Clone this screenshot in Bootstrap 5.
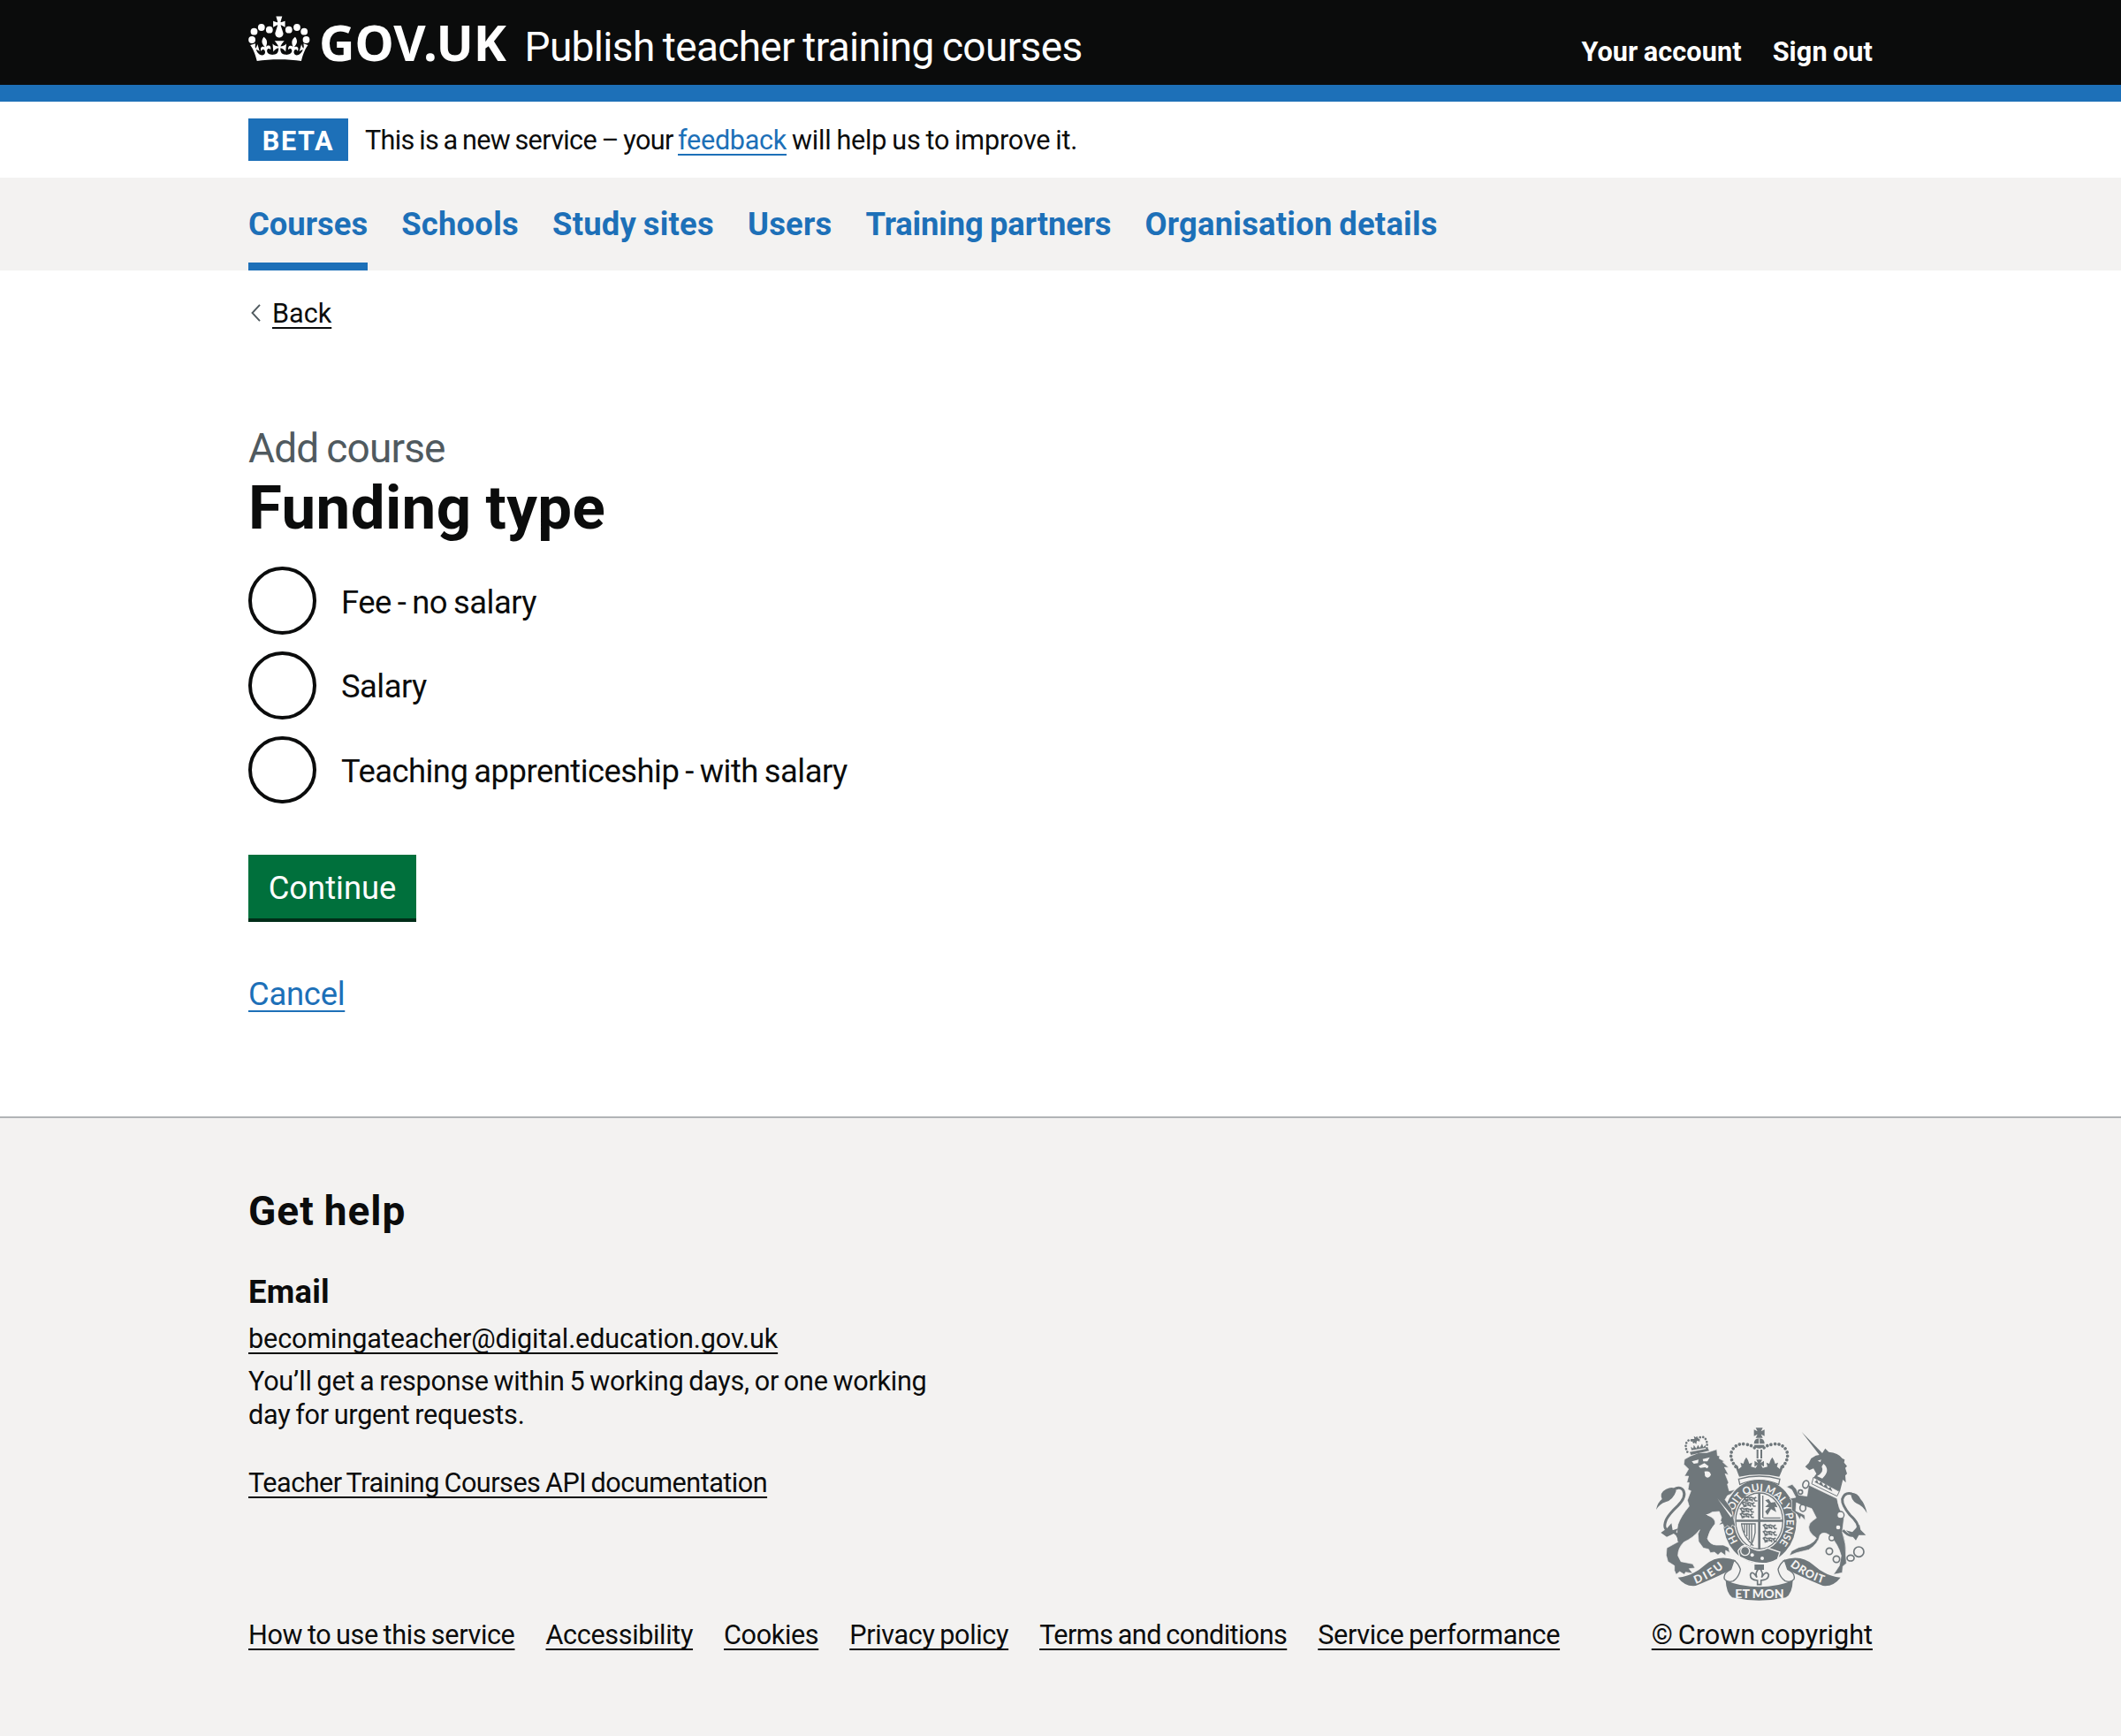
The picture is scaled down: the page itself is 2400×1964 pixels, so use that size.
<!DOCTYPE html>
<html lang="en">
<head>
<meta charset="utf-8">
<meta name="viewport" content="width=device-width, initial-scale=1">
<title>Funding type – Publish teacher training courses</title>
<link href="https://cdn.jsdelivr.net/npm/bootstrap@5.3.0/dist/css/bootstrap.min.css" rel="stylesheet">
<style>
  :root { --ink: #0b0c0c; --brand: #1d70b8; --grey: #f3f2f1; --crest: #6f777b; }
  body { font-family: Roboto, "Liberation Sans", sans-serif; color: var(--ink); font-size: 30.6px; line-height: 38.3px; word-spacing: -.05em; }
  .wrap { width: 1838px; margin-left: 281px; }
  a { color: var(--brand); text-decoration: underline; text-decoration-thickness: 2px; text-underline-offset: 5px; text-decoration-skip-ink: none; }
  a.ink { color: var(--ink); }

  .site-header { background: var(--ink); height: 115px; border-bottom: 19px solid var(--brand); padding-top: 17.6px; line-height: 1; }
  .site-header a { color: #fff; text-decoration: none; }
  .crown { width: 70px; height: 51px; margin-bottom: -5.2px; margin-left: -.5px; fill: #fff; }
  .wordmark { font: 700 56px/1 "Noto Sans", sans-serif; margin-left: 10.5px; }
  .service { font-size: 46px; letter-spacing: -.66px; margin-left: 20.5px; }
  .account { gap: 35px; letter-spacing: .12px; }

  .phase { height: 86px; }
  .phase-tag { background: var(--brand); color: #fff; width: 113px; height: 48px; line-height: 51px; letter-spacing: 1.6px; }
  .phase-text { margin-left: 19px; letter-spacing: -.65px; padding-top: 2px; }
  .phase-text a { letter-spacing: -.29px; }
  .phase-end { letter-spacing: -.18px; }

  .service-nav { background: var(--grey); gap: 38.1px; height: 105px; padding-left: 281px; font-size: 36.4px; letter-spacing: .22px; }
  .service-nav a { line-height: 106px; height: 105px; text-decoration: none; }
  .service-nav a.current { box-shadow: inset 0 -9px var(--brand); letter-spacing: 0; }
  .service-nav .n-partners { letter-spacing: -.15px; }

  .back { margin-top: 29.5px; padding-left: 3px; gap: 13px; }
  .back svg { width: 11px; height: 20px; stroke: #505a5f; fill: none; margin-top: -1px; }
  .caption-l { color: #505a5f; font-size: 46px; line-height: 57px; letter-spacing: -.86px; margin-top: 105.5px; }
  .title-xl { font-size: 69px; line-height: 76.6px; letter-spacing: .4px; margin: .8px 0 27.6px; }
  .choices { gap: 19.1px; font-size: 36.4px; letter-spacing: -.52px; }
  .choice { padding: 0; margin: 0; min-height: 76.6px; }
  .choice .form-check-input { width: 76.6px; height: 76.6px; margin: 0; border: 4px solid var(--ink); float: none; }
  .choice label { margin-left: 28.4px; padding-top: 4.5px; }
  .go { background: #00703c; color: #fff; border: 0; border-radius: 0; font-size: 36.4px; line-height: 75px; width: 190px; height: 72px; padding: 0; margin-top: 58px; box-shadow: 0 4px #002d18; word-spacing: 0; }
  .cancel { font-size: 36.4px; line-height: 48px; letter-spacing: -.25px; margin-top: 62px; text-underline-offset: 6px; }

  .site-footer { margin-top: 113.5px; background: var(--grey); border-top: 2px solid #b1b4b6; padding-top: 77px; padding-bottom: 94px; }
  .h-get { font-size: 46px; line-height: 57px; letter-spacing: 1px; margin: 0; }
  .h-email { font-size: 36.4px; line-height: 46px; letter-spacing: .25px; margin: 40px 0 11px; }
  .mail { letter-spacing: -.12px; }
  .reply { margin: 10px 0 38.4px; letter-spacing: -.25px; }
  .api { letter-spacing: -.5px; }
  .links { gap: 35px; margin-top: 133.2px; letter-spacing: -.36px; }
  .l-terms { letter-spacing: -.57px; }
  .crest { width: 240px; height: 196px; margin-bottom: 19.5px; }
</style>
<script src="https://cdn.jsdelivr.net/npm/bootstrap@5.3.0/dist/js/bootstrap.bundle.min.js"></script>
</head>
<body class="d-flex flex-column min-vh-100">

<header class="site-header">
  <div class="wrap d-flex align-items-baseline">
    <svg class="crown" viewBox="280.5 20 70 51" aria-hidden="true">
      <g transform="translate(282.7 9.8) scale(2.04)">
        <path transform="translate(0 5.3)" d="M17 4.7l2.3 1.2V2.5l-2.3.7-.2-.2.9-3h-3.4l.9 3-.2.2c-.1.1-2.3-.7-2.3-.7v3.4L15 4.7c.1.1.1.2.2.2l-1.3 4c-.1.2-.1.4-.1.6 0 1.1.8 2 1.9 2.2h.7c1-.2 1.9-1.1 1.9-2.1 0-.2 0-.4-.1-.6l-1.3-4c-.1-.2 0-.2.1-.3"/>
        <path d="M16 29.2c4.4 0 8.6.3 12.3.8 1.1-4.5 2.4-7 3.7-8.8l-2.5-.9c.2 1.3.3 1.9 0 2.7-.4-.4-.8-1.1-1.1-2.3l-1.2 4c.7-.5 1.3-.8 2-.9-1.1 2.5-2.6 3.1-3.5 3-1.1-.2-1.7-1.2-1.5-2.1.3-1.2 1.5-1.5 2.1-.1 1.1-2.3-.8-3-2-2.3 1.9-1.9 2.1-3.5.6-5.6-2.1 1.6-2.1 3.2-1.2 5.5-1.2-1.4-3.2-.6-2.5 1.6.9-1.4 2.1-.5 1.9.8-.2 1.1-1.7 2.1-3.5 1.9-2.7-.2-2.9-2.1-2.9-3.6.7-.1 1.9.5 2.9 1.9l.4-4.3c-1.1 1.1-2.1 1.4-3.2 1.4.4-1.2 2.1-3 2.1-3h-5.4s1.7 1.9 2.1 3c-1.1 0-2.1-.2-3.2-1.4l.4 4.3c1-1.4 2.2-2 2.9-1.9-.1 1.5-.2 3.4-2.9 3.6-1.9.2-3.4-.8-3.5-1.9-.2-1.3 1-2.2 1.9-.8.7-2.3-1.2-3-2.5-1.6.9-2.2.9-3.9-1.2-5.5-1.5 2-1.3 3.7.6 5.6-1.2-.7-3.1 0-2 2.3.6-1.4 1.8-1.1 2.1.1.2.9-.3 1.9-1.5 2.1-.9.2-2.4-.5-3.5-3 .6 0 1.2.3 2 .9l-1.2-4c-.3 1.1-.7 1.9-1.1 2.3-.3-.8-.2-1.4 0-2.7L0 21.200c1.3 1.800 2.600 4.300 3.700 8.800 3.700-.5 7.900-.8 12.300-.8z"/>
      </g>
      <circle cx="304.300" cy="35.700" r="3.900"/><circle cx="295.300" cy="33" r="3.900"/><circle cx="287" cy="37.700" r="3.900"/><circle cx="284.600" cy="47" r="3.900"/>
      <circle cx="326.300" cy="35.700" r="3.900"/><circle cx="335.500" cy="33" r="3.900"/><circle cx="343.700" cy="37.700" r="3.900"/><circle cx="346" cy="47" r="3.900"/>
    </svg>
    <a class="wordmark" href="#">GOV.UK</a>
    <a class="service" href="#">Publish teacher training courses</a>
    <nav class="account d-flex ms-auto fw-bold">
      <a href="#">Your account</a>
      <a href="#">Sign out</a>
    </nav>
  </div>
</header>

<div class="phase wrap d-flex align-items-center">
  <strong class="phase-tag text-center">BETA</strong>
  <span class="phase-text">This is a new service – your <a href="#">feedback</a><span class="phase-end"> will help us to improve it.</span></span>
</div>

<nav class="service-nav d-flex fw-bold">
  <a class="current" href="#">Courses</a>
  <a href="#">Schools</a>
  <a href="#">Study sites</a>
  <a href="#">Users</a>
  <a class="n-partners" href="#">Training partners</a>
  <a href="#">Organisation details</a>
</nav>

<main class="wrap d-flex flex-column align-items-start">
  <div class="back d-flex align-items-center">
    <svg viewBox="0 0 11 20" aria-hidden="true"><path d="M10 .8 1.500 10 10 19.200" stroke-width="1.900"/></svg>
    <a class="ink" href="#">Back</a>
  </div>
  <div class="caption-l">Add course</div>
  <h1 class="title-xl fw-bold">Funding type</h1>
  <div class="choices d-flex flex-column">
    <div class="choice form-check d-flex align-items-center"><input class="form-check-input" type="radio" name="funding" id="f1"><label for="f1">Fee - no salary</label></div>
    <div class="choice form-check d-flex align-items-center"><input class="form-check-input" type="radio" name="funding" id="f2"><label for="f2">Salary</label></div>
    <div class="choice form-check d-flex align-items-center"><input class="form-check-input" type="radio" name="funding" id="f3"><label for="f3">Teaching apprenticeship - with salary</label></div>
  </div>
  <button class="go btn" type="button">Continue</button>
  <a class="cancel" href="#">Cancel</a>
</main>

<footer class="site-footer flex-grow-1">
  <div class="wrap d-flex justify-content-between align-items-end">
    <div class="d-flex flex-column align-items-start">
      <h2 class="h-get fw-bold">Get help</h2>
      <h3 class="h-email fw-bold">Email</h3>
      <a class="ink mail" href="#">becomingateacher@digital.education.gov.uk</a>
      <p class="reply">You’ll get a response within 5 working days, or one working<br>day for urgent requests.</p>
      <a class="ink api" href="#">Teacher Training Courses API documentation</a>
      <div class="links d-flex">
        <a class="ink" href="#">How to use this service</a>
        <a class="ink" href="#">Accessibility</a>
        <a class="ink" href="#">Cookies</a>
        <a class="ink" href="#">Privacy policy</a>
        <a class="ink l-terms" href="#">Terms and conditions</a>
        <a class="ink" href="#">Service performance</a>
      </div>
    </div>
    <div class="d-flex flex-column align-items-center">
      <svg class="crest" viewBox="72 75 720 588" role="img" aria-label="Royal coat of arms" fill="#6f777b">
        <defs>
          <path id="arc" d="M352 464 A92 105 0 1 1 492 464"/>
          <path id="arcL" d="M206 606 Q262 586 306 546"/>
          <path id="arcR" d="M526 544 Q586 592 650 607"/>
          <g id="cat" fill="none" stroke="#6f777b" stroke-width="5" stroke-linejoin="round"><path d="M0 6 L8 2 14 6 26 4 36 8 44 4M4 6 L8 14 16 12 14 18M22 7 L22 13 30 12 30 18M36 8 L40 16 48 16M6 18 L12 16"/></g>
        </defs>
        <!-- centre crown -->
        <path d="M410 76 L434 76 428 88 440 82 440 104 428 98 434 110 410 110 416 98 404 104 404 82 416 88ZM404 130 Q404 112 422 112 Q440 112 440 130ZM404 134 L440 134 Q436 146 422 146 Q408 146 404 134ZM413 150 h6 v30 h-6zM426 150 h6 v30 h-6z"/>
        <path d="M422 112v20" stroke="#f3f2f1" stroke-width="3"/>
        <g fill="none" stroke="#6f777b" stroke-width="11" stroke-linecap="round" stroke-dasharray=".1 13.200"><path d="M342 208 Q318 178 330 152 Q346 126 376 132 Q400 136 406 144"/><path d="M502 208 Q526 178 514 152 Q498 126 468 132 Q444 136 438 144"/></g>
        <path d="M338 198 L350 206 352 216 362 208 358 194 368 198 372 186 378 176 384 186 388 198 398 194 394 208 410 212 416 202 406 208 406 188 418 196 412 184 432 184 426 196 438 188 438 208 428 202 434 212 450 208 446 194 456 198 460 186 466 176 472 186 476 198 486 194 482 208 492 216 494 206 506 198 Q500 222 490 242 Q422 228 354 242 Q346 222 338 198Z"/>
        <!-- garter -->
        <ellipse cx="424" cy="394" rx="124" ry="142"/>
        <path d="M352 250 Q422 230 492 250 L488 268 Q422 240 356 268Z" fill="#f3f2f1" stroke="#6f777b" stroke-width="4"/>
        <ellipse cx="422" cy="392" rx="86" ry="101" fill="#f3f2f1"/>
        <ellipse cx="422" cy="392" rx="80" ry="95" fill="none" stroke="#6f777b" stroke-width="4"/>
        <path d="M418 298h8v188h-8zM343 388h158v7h-158z"/>
        <path d="M434 306v76M436 382h58M360 402h48v30q-6 32-16 44M362 404q4 40 40 72M372 404v28M380 404v40M388 404v52M396 404v60" fill="none" stroke="#6f777b" stroke-width="4"/>
        <use href="#cat" x="362" y="326"/><use href="#cat" x="356" y="346"/><use href="#cat" x="356" y="364"/><use href="#cat" x="368" y="308"/>
        <use href="#cat" x="434" y="402"/><use href="#cat" x="434" y="424"/><use href="#cat" x="434" y="446"/>
        <path d="M442 322 L454 318 462 330 476 328 484 346 474 344 480 362 462 352 450 372 442 360 456 346 442 344 454 334Z"/>
        <text fill="#f3f2f1" font-family="Lato, sans-serif" font-weight="700" font-size="35"><textPath href="#arc" textLength="456" startOffset="3">HON SOIT QUI MAL Y PENSE</textPath></text>
        <path d="M350 494 Q366 466 388 480 Q420 502 450 484 L492 498 484 522 Q450 542 410 534 Q380 528 356 514Z" stroke="#f3f2f1" stroke-width="4"/>
        <circle cx="374" cy="494" r="15" fill="none" stroke="#f3f2f1" stroke-width="4"/><circle cx="398" cy="508" r="6" fill="#f3f2f1"/><circle cx="432" cy="519" r="6" fill="#f3f2f1"/>
        <!-- lion -->
        <path d="M168 183 L188 172 215 161 245 160 278 149 280 170 288 172 286 180 304 190 298 192 318 211 304 210 318 236 306 232 318 262 314 268 320 290 340 286 324 302 314 306 306 320 328 350 334 380 342 412 330 406 326 416 314 408 304 416 298 402 286 406 294 380 286 360 262 362 246 372 Q276 384 272 402 Q252 424 246 452 Q254 472 276 474 L300 474 318 482 322 500 308 492 308 510 292 498 282 508 270 498 256 500 250 488 232 484 216 462 214 436 220 422 Q200 448 166 464 Q146 484 146 510 L156 530 196 538 204 552 184 554 196 570 172 566 168 574 152 564 140 574 134 560 134 544 112 530 106 508 108 484 148 462 Q138 440 146 404 Q156 376 184 342 L178 322 190 290 180 286 184 262 176 262 182 240 168 240 182 216 166 200Z" stroke="#f3f2f1" stroke-width="2"/>
        <path d="M193 190 L216 184 214 196 200 198ZM230 182 L254 176 246 190 232 190ZM216 206 L236 196 250 206 246 214 238 210 222 212ZM236 224 Q256 220 258 236 Q248 252 238 240ZM280 316 L330 374 326 380ZM240 370 L276 364 290 374 282 382 296 396 284 404 274 384Z" fill="#f3f2f1"/>
        <path d="M150 462 Q150 432 120 426 Q92 424 106 388 Q116 368 146 340 Q176 310 164 288 Q152 270 124 290" fill="none" stroke="#6f777b" stroke-width="9"/>
        <path d="M72 354 Q76 330 92 318 Q82 296 106 284 Q132 272 140 290 Q130 320 104 328 Q84 334 72 354ZM88 432 L108 418 124 400 128 424 146 418 138 432 108 446Z"/>
        <path d="M186 158 L248 146 252 154 190 168ZM192 152 L190 140 198 146 200 134 208 146 214 134 220 144 228 130 232 142 240 134 240 144ZM200 104 L206 108 212 104 212 114 220 114 220 122 210 120 208 132 200 122 190 122 192 114 202 114Z"/>
        <g fill="none" stroke="#6f777b" stroke-width="8" stroke-linecap="round" stroke-dasharray=".1 10.500"><path d="M178 158 Q166 134 180 120 Q192 112 202 128 Q212 104 234 108 Q248 118 244 146"/></g>
        <!-- unicorn -->
        <path d="M566 90 L636 162 646 146 658 158 Q690 160 704 180 L712 184 710 194 720 206 714 212 720 232 714 238 716 262 706 252 696 292 604 248 616 232 606 214 592 220 578 208 590 196 598 180 614 170 626 168Z"/>
        <path d="M640 198 Q666 220 636 248 L618 240 Q644 226 634 208ZM620 188 l12 -4 -2 8z" fill="#f3f2f1"/>
        <path d="M606 244 L694 292 686 308 600 266Z" fill="#f3f2f1" stroke="#6f777b" stroke-width="3"/>
        <path d="M610 260 l8 -8 6 14 8 -8 8 16 8 -8 8 16 8 -6 6 16z"/>
        <path d="M590 270 L686 316 Q690 350 710 380 L704 430 Q718 470 716 510 L718 536 706 546 704 568 674 574 694 544 700 510 Q690 470 660 440 Q640 426 628 440 Q622 470 590 490 L548 500 524 510 532 494 556 482 Q604 474 616 450 Q580 426 594 400 Q604 390 616 382 L600 350 564 338 548 330 546 358 576 372 578 390 564 376 560 388 550 370 532 356 532 322 526 316 546 312 532 286 514 276 534 268 548 284 556 304 584 308Z" stroke="#f3f2f1" stroke-width="2"/>
        <g fill="none" stroke="#6f777b" stroke-width="5"><ellipse cx="580" cy="268" rx="10" ry="13" transform="rotate(20 580 268)"/><ellipse cx="570" cy="348" rx="10" ry="12"/><circle cx="562" cy="294" r="7"/><circle cx="660" cy="495" r="11"/><circle cx="684" cy="522" r="11"/><ellipse cx="732" cy="518" rx="12" ry="10"/><circle cx="760" cy="497" r="17"/></g>
        <g fill="#f3f2f1" stroke="#6f777b" stroke-width="4"><circle cx="698" cy="372" r="12"/><circle cx="690" cy="414" r="9"/><circle cx="668" cy="450" r="9"/></g>
        <path d="M706 424 Q740 460 756 424 Q764 402 730 372 Q702 338 704 318 Q712 294 736 300" fill="none" stroke="#6f777b" stroke-width="9"/>
        <path d="M788 366 Q780 332 766 318 Q756 296 734 296 Q732 320 752 332 Q774 340 788 366ZM716 424 L738 430 762 404 766 422 784 440 760 440 750 458 740 446Z"/>
        <!-- motto scroll -->
        <path d="M146 584 Q196 580 240 540 Q284 504 342 526 L326 558 Q262 590 206 612 Q170 616 146 584ZM698 584 Q648 580 604 540 Q560 504 502 526 L518 558 Q582 590 638 612 Q674 616 698 584Z"/>
        <g fill="#f3f2f1" stroke="#6f777b" stroke-width="4"><path d="M326 556 Q298 570 304 590 Q314 602 334 596 Q354 582 358 556 Q350 534 336 526ZM518 556 Q546 570 540 590 Q530 602 510 596 Q490 582 486 556 Q494 534 508 526Z"/></g>
        <path d="M308 594 Q360 616 422 616 Q484 616 536 594 Q534 640 512 652 Q422 672 330 652 Q310 636 308 594Z"/>
        <g fill="#f3f2f1" font-family="Lato, sans-serif" font-weight="900">
          <text font-size="42" x="340" y="654" textLength="166">ET MON</text>
          <text font-size="38"><textPath href="#arcL" textLength="112">DIEU</textPath></text>
          <text font-size="38"><textPath href="#arcR" textLength="128">DROIT</textPath></text>
        </g>
        <path d="M406 540h32v18h-32z"/>
        <path d="M422 552 Q438 566 430 584 Q446 558 454 574 Q454 590 438 592 L428 594 428 608 416 608 416 594 Q390 592 392 574 Q398 558 414 584 Q406 566 422 552Z" fill="#f3f2f1" stroke="#6f777b" stroke-width="5"/>
      </svg>
      <a class="ink copy" href="#">© Crown copyright</a>
    </div>
  </div>
</footer>
</body>
</html>
